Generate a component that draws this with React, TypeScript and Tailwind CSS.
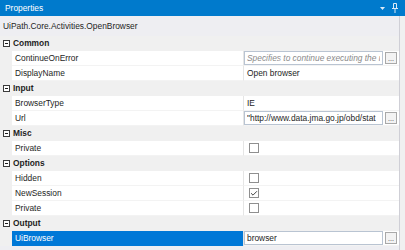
import { Check } from 'lucide-react';

type Value =
  | { kind: 'text'; text: string }
  | { kind: 'box'; text: string; placeholder?: boolean }
  | { kind: 'check'; checked: boolean };

interface Prop {
  name: string;
  value: Value;
  selected?: boolean;
}

const sections: { name: string; props: Prop[] }[] = [
  {
    name: 'Common',
    props: [
      {
        name: 'ContinueOnError',
        value: { kind: 'box', text: 'Specifies to continue executing the r', placeholder: true },
      },
      { name: 'DisplayName', value: { kind: 'text', text: 'Open browser' } },
    ],
  },
  {
    name: 'Input',
    props: [
      { name: 'BrowserType', value: { kind: 'text', text: 'IE' } },
      { name: 'Url', value: { kind: 'box', text: '"http://www.data.jma.go.jp/obd/stat' } },
    ],
  },
  { name: 'Misc', props: [{ name: 'Private', value: { kind: 'check', checked: false } }] },
  {
    name: 'Options',
    props: [
      { name: 'Hidden', value: { kind: 'check', checked: false } },
      { name: 'NewSession', value: { kind: 'check', checked: true } },
      { name: 'Private', value: { kind: 'check', checked: false } },
    ],
  },
  { name: 'Output', props: [{ name: 'UiBrowser', value: { kind: 'box', text: 'browser' }, selected: true }] },
];

function Collapse() {
  return (
    <div className="w-[7px] h-[7px] border border-[#3c3c3c] flex items-center justify-center bg-white">
      <div className="w-[3px] h-px bg-[#1e1e1e]" />
    </div>
  );
}

function ValueCell({ value }: { value: Value }) {
  if (value.kind === 'text') {
    return <div className="pl-[3px] truncate">{value.text}</div>;
  }
  if (value.kind === 'check') {
    return (
      <div className="pl-[5px] flex items-center">
        <div className="w-[10px] h-[10px] border border-[#8f8f8f] bg-white flex items-center justify-center">
          {value.checked && <Check className="w-[9px] h-[9px] text-[#1e1e1e]" strokeWidth={2.5} />}
        </div>
      </div>
    );
  }
  return (
    <div className="flex items-center h-full gap-[2px] pr-[2px]">
      <div className="flex-1 min-w-0 h-[14px] border border-[#b9c4d2] bg-white flex items-center px-[2px] overflow-hidden">
        <span
          className={
            value.placeholder
              ? 'block min-w-0 overflow-hidden italic text-[#8a8a8a] whitespace-nowrap'
              : 'block min-w-0 overflow-hidden text-[#1e1e1e] whitespace-nowrap'
          }
        >
          {value.text}
        </span>
      </div>
      <div className="w-[12px] h-[12px] shrink-0 border border-[#a9a9a9] bg-[#f3f3f3] flex items-end justify-center text-[7px] leading-[8px] text-[#333]">
        ...
      </div>
    </div>
  );
}

export default function App() {
  return (
    <div className="w-[405px] h-[250px] overflow-hidden bg-[#eeeef2] text-[8.4px] text-[#1e1e1e] font-['Liberation_Sans',Arial,sans-serif] flex flex-col select-none">
      {/* Title bar */}
      <div className="h-[16px] bg-[#007acc] flex items-center pl-[5px] pr-[7px] shrink-0">
        <span className="text-white text-[8.4px] leading-none">Properties</span>
        <div className="flex-1 mx-[6px] h-[4px] bg-[radial-gradient(#5fa6e0_45%,transparent_50%)] bg-[length:2px_2px]" />
        <svg width="5" height="3" viewBox="0 0 5 3" className="ml-[2px]">
          <path d="M0 0h5L2.5 3z" fill="#dbeaf7" />
        </svg>
        <svg width="6" height="10" viewBox="0 0 6 10" className="ml-[7px]">
          <path d="M1.5 0.5h3v5h-3z M0 5.5h6" stroke="#dbeaf7" strokeWidth="1" fill="none" />
          <path d="M3 6v4" stroke="#dbeaf7" strokeWidth="1" />
        </svg>
      </div>

      <div className="flex flex-1 min-h-0">
        <div className="w-[400px] border-r border-[#cfcfd6] flex flex-col">
          {/* Type name */}
          <div className="h-[20px] flex items-center pl-[3px] shrink-0">UiPath.Core.Activities.OpenBrowser</div>

          {sections.map((s) => (
            <div key={s.name}>
              <div className="h-[15px] flex items-center bg-[#f0f0f0]">
                <div className="w-[12px] flex justify-center pl-[1px]">
                  <Collapse />
                </div>
                <span className="font-bold pl-[1px]">{s.name}</span>
              </div>
              {s.props.map((p) => (
                <div key={p.name} className="h-[15px] flex">
                  <div className="w-[12px] shrink-0 bg-[#f0f0f0]" />
                  <div
                    className={
                      p.selected
                        ? 'w-[232px] shrink-0 flex items-center pl-[3px] bg-[#0078d7] text-white border-r border-[#e5e5e5]'
                        : 'w-[232px] shrink-0 flex items-center pl-[3px] bg-white border-b border-[#f3f3f3] border-r border-r-[#e5e5e5]'
                    }
                  >
                    {p.name}
                  </div>
                  <div className="flex-1 min-w-0 bg-white flex items-center border-b border-[#f3f3f3]">
                    <div className="w-full">
                      <ValueCell value={p.value} />
                    </div>
                  </div>
                </div>
              ))}
            </div>
          ))}
        </div>
        <div className="flex-1 bg-[#f0f0f0]" />
      </div>
    </div>
  );
}
